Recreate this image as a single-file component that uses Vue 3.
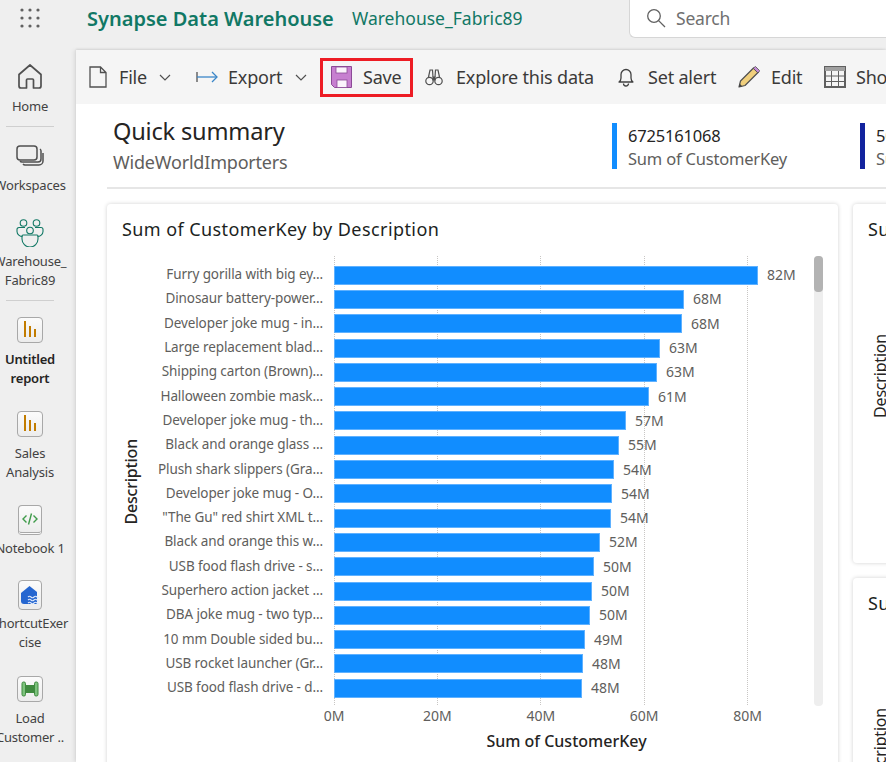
<script setup>
const rows = [
  ['Furry gorilla with big ey...', 424, '82M'],
  ['Dinosaur battery-power...', 350, '68M'],
  ['Developer joke mug - in...', 348, '68M'],
  ['Large replacement blad...', 326, '63M'],
  ['Shipping carton (Brown)...', 323, '63M'],
  ['Halloween zombie mask...', 315, '61M'],
  ['Developer joke mug - th...', 292, '57M'],
  ['Black and orange glass ...', 285, '55M'],
  ['Plush shark slippers (Gra...', 280, '54M'],
  ['Developer joke mug - O...', 278, '54M'],
  ['"The Gu" red shirt XML t...', 277, '54M'],
  ['Black and orange this w...', 266, '52M'],
  ['USB food flash drive - s...', 260, '50M'],
  ['Superhero action jacket ...', 258, '50M'],
  ['DBA joke mug - two typ...', 256, '50M'],
  ['10 mm Double sided bu...', 251, '49M'],
  ['USB rocket launcher (Gr...', 249, '48M'],
  ['USB food flash drive - d...', 248, '48M']
]
const ticks = ['0M', '20M', '40M', '60M', '80M']
</script>

<template>
  <div class="app">
    <header class="top">
      <svg class="waffle" width="20" height="20" viewBox="0 0 20 20" fill="#616161">
        <circle v-for="c in [[2,2],[10,2],[18,2],[2,10],[10,10],[18,10],[2,18],[10,18],[18,18]]" :key="c.join()" :cx="c[0]" :cy="c[1]" r="1.6" />
      </svg>
      <div class="product">Synapse Data Warehouse</div>
      <div class="item-name">Warehouse_Fabric89</div>
      <div class="search">
        <svg width="20" height="20" viewBox="0 0 20 20" fill="none" stroke="#616161" stroke-width="1.3"><circle cx="8" cy="8" r="6.3" /><path d="M12.6 12.6 19 19" /></svg>
        <span>Search</span>
      </div>
    </header>

    <div class="body">
      <nav class="nav">
        <div class="nav-item home">
          <svg width="26" height="27" viewBox="0 0 26 27" fill="none" stroke="#505050" stroke-width="1.7" stroke-linejoin="round"><path d="M2 11.5 13 2l11 9.5V23a2 2 0 0 1-2 2h-5.5v-8a1 1 0 0 0-1-1h-5a1 1 0 0 0-1 1v8H4a2 2 0 0 1-2-2z" /></svg>
          <span>Home</span>
        </div>
        <div class="rule first"></div>
        <div class="nav-item ws">
          <svg width="28" height="24" viewBox="0 0 28 24" fill="none" stroke="#505050" stroke-width="1.5"><rect x="1" y="1" width="20" height="14" rx="3" /><path d="M24 4a2.500 2.500 0 0 1 1 2v8a3 3 0 0 1-3 3H6a2.500 2.500 0 0 1-2-1" /><path d="M27 8v8a4 4 0 0 1-4 4H9a3 3 0 0 1-2-1" /></svg>
          <span>Workspaces</span>
        </div>
        <div class="nav-item wh">
          <svg width="28" height="29" viewBox="0 0 28 29" fill="none" stroke="#117865" stroke-width="1.1"><circle cx="7.500" cy="5" r="3.300" /><circle cx="20.500" cy="5" r="3.300" /><circle cx="14" cy="12.500" r="3.300" /><path d="M9 9.500H3a2 2 0 0 0-2 2v2c0 3 3 5 5.500 5M19 9.500h6a2 2 0 0 1 2 2v2c0 3-3 5-5.500 5" /><path d="M7 17h14a1 1 0 0 1 1 1v3a8 8 0 0 1-16 0v-3a1 1 0 0 1 1-1z" /></svg>
          <span>Warehouse_<br />Fabric89</span>
        </div>
        <div class="rule second"></div>
        <div class="nav-item tile-item report">
          <div class="tile"><svg width="14" height="18" viewBox="0 0 14 18" fill="#c27c00"><rect x="1" y="0" width="2" height="16" /><rect x="6" y="5" width="2" height="11" /><rect x="11" y="8" width="2" height="8" /></svg></div>
          <span><b>Untitled<br />report</b></span>
        </div>
        <div class="nav-item tile-item sales">
          <div class="tile"><svg width="14" height="18" viewBox="0 0 14 18" fill="#c27c00"><rect x="1" y="0" width="2" height="16" /><rect x="6" y="5" width="2" height="11" /><rect x="11" y="8" width="2" height="8" /></svg></div>
          <span>Sales<br />Analysis</span>
        </div>
        <div class="nav-item tile-item note">
          <div class="tile book"><svg width="16" height="12" viewBox="0 0 16 12" fill="none" stroke="#3f9b4a" stroke-width="1.400"><path d="M4.500 2.500 1 6l3.500 3.500M11.500 2.500 15 6l-3.500 3.500M9.500 0.500 6.500 11.500" /></svg></div>
          <span>Notebook 1</span>
        </div>
        <div class="nav-item tile-item shortcut">
          <div class="tile tall"><svg width="20" height="20" viewBox="0 0 20 20"><path d="M1 8 9.500 1 17 7v12H4a3 3 0 0 1-3-3z" fill="#2566d0" /><path d="M8 12q1.500-1.500 3 0t3 0 3 0 2 0M8 15q1.500-1.500 3 0t3 0 3 0 2 0M8 18q1.500-1.500 3 0t3 0 3 0 2 0" fill="none" stroke="#dfe9fa" stroke-width="1.100" /></svg></div>
          <span>ShortcutExer<br />cise</span>
        </div>
        <div class="nav-item tile-item load">
          <div class="tile"><svg width="18" height="16" viewBox="0 0 18 16"><rect x="3" y="4" width="12" height="8" fill="#3f8a3f" /><rect x="1" y="1" width="3.500" height="14" rx="1.500" fill="#7cc27c" stroke="#3f8a3f" /><rect x="13.500" y="1" width="3.500" height="14" rx="1.500" fill="#7cc27c" stroke="#3f8a3f" /></svg></div>
          <span>Load<br />Customer ..</span>
        </div>
      </nav>

      <main class="main">
        <div class="toolbar">
          <div class="tool t-file">
            <svg width="18" height="22" viewBox="0 0 18 22" fill="none" stroke="#505050" stroke-width="1.300"><path d="M1 1h10.500L17 6.500V21H1zM11.500 1v5.500H17" /></svg>
            <span>File</span>
            <svg class="chev" width="12" height="7" viewBox="0 0 12 7" fill="none" stroke="#505050" stroke-width="1.200"><path d="m1 1 5 5 5-5" /></svg>
          </div>
          <div class="tool t-export">
            <svg width="22" height="12" viewBox="0 0 22 12" fill="none" stroke-width="1.300"><path d="M1 1v10" stroke="#505050" /><path d="M1 6h20" stroke="#3a86c8" /><path d="m16 1 5 5-5 5" stroke="#3a86c8" /></svg>
            <span>Export</span>
            <svg class="chev" width="12" height="7" viewBox="0 0 12 7" fill="none" stroke="#505050" stroke-width="1.200"><path d="m1 1 5 5 5-5" /></svg>
          </div>
          <div class="tool t-save">
            <svg width="21" height="22" viewBox="0 0 21 22"><path d="M0.500 0.500h20v21H3.500l-3-3z" fill="#c77fd0" stroke="#8c4a97" /><rect x="5" y="1" width="11" height="6" fill="#fbf3fc" stroke="#8c4a97" stroke-width="0.800" /><rect x="6" y="14" width="10" height="7.500" fill="#fbf3fc" stroke="#8c4a97" stroke-width="0.800" /></svg>
            <span>Save</span>
          </div>
          <div class="tool t-explore">
            <svg width="18" height="18" viewBox="0 0 18 18" fill="none" stroke="#505050" stroke-width="1.200"><path d="M3.500 9 5 2h2.500l.500 7M14.500 9 13 2h-2.500l-.500 7" /><circle cx="4.500" cy="13" r="3.700" /><circle cx="13.500" cy="13" r="3.700" /><path d="M8 9h2v3H8z" fill="#505050" /></svg>
            <span>Explore this data</span>
          </div>
          <div class="tool t-alert">
            <svg width="16" height="19" viewBox="0 0 16 19" fill="none" stroke="#404040" stroke-width="1.300"><path d="M1 14c1.500-1 2-2.500 2-4V6.500a5 5 0 0 1 10 0V10c0 1.500.5 3 2 4z" stroke-linejoin="round" /><path d="M5.500 15.500a2.500 2.500 0 0 0 5 0" /></svg>
            <span>Set alert</span>
          </div>
          <div class="tool t-edit">
            <svg width="22" height="22" viewBox="0 0 22 22"><path d="m1 21 1.500-6L15.500 2l4.500 4.500L7 19.500z" fill="#f0cf7c" stroke="#505050" stroke-width="1.200" stroke-linejoin="round" /><path d="m16.500 1 1-.5 4 4-.5 1.500-1 1-4.500-4.500z" fill="#c48ad6" stroke="#505050" stroke-width="0.800" /><path d="m1 21 .8-3.200 2.400 2.400z" fill="#404040" /></svg>
            <span>Edit</span>
          </div>
          <div class="tool t-table">
            <svg width="22" height="22" viewBox="0 0 22 22" fill="none" stroke="#606060" stroke-width="1"><rect x="1" y="1" width="20" height="20" stroke-width="2" /><rect x="1" y="1" width="20" height="4" fill="#a0a0a0" stroke="none" /><path d="M1 10h20M1 15.500h20M7.500 5v16M14.500 5v16" /></svg>
            <span>Show tables</span>
          </div>
        </div>

        <section class="summary">
          <div class="titles">
            <div class="h1">Quick summary</div>
            <div class="h2">WideWorldImporters</div>
          </div>
          <div class="kpi blue">
            <div class="kv">6725161068</div>
            <div class="kl">Sum of CustomerKey</div>
          </div>
          <div class="kpi navy">
            <div class="kv">5034418</div>
            <div class="kl">Sum of StockItemKey</div>
          </div>
        </section>

        <section class="cards">
          <div class="card big">
            <div class="card-title">Sum of CustomerKey by Description</div>
            <div class="chart">
              <div class="yaxis"><span>Description</span></div>
              <div class="plot">
                <div class="rows">
                  <i v-for="n in [0, 1, 2, 3, 4]" :key="n" class="grid" :style="{ left: 10.5 + n * 103.4 + 'px' }"></i>
                  <div v-for="r in rows" :key="r[0]" class="row">
                    <div class="lab">{{ r[0] }}</div>
                    <div class="bar" :style="{ width: r[1] + 'px' }"></div>
                    <div class="val">{{ r[2] }}</div>
                  </div>
                </div>
                <div class="ticks">
                  <span v-for="(t, n) in ticks" :key="t" :style="{ left: n * 103.4 + 'px' }">{{ t }}</span>
                </div>
                <div class="xtitle">Sum of CustomerKey</div>
              </div>
              <div class="scroll"><div class="thumb"></div></div>
            </div>
          </div>
          <div class="side">
            <div class="card mini one">
              <div class="card-title">Sum of StockItemKey by Description</div>
              <div class="mini-y"><span>Description</span></div>
            </div>
            <div class="card mini two">
              <div class="card-title">Sum of SalesOrderKey by Description</div>
              <div class="mini-y"><span>Description</span></div>
            </div>
          </div>
        </section>
      </main>
    </div>
  </div>
</template>

<style>
html, body { margin: 0; padding: 0; overflow: hidden; }
</style>

<style scoped>
.app { width: 886px; height: 762px; overflow: hidden; background: #efefef; font-family: "Noto Sans", "Open Sans", sans-serif; color: #252423; letter-spacing: -0.2px; }
.top { height: 50px; display: flex; position: relative; align-items: flex-start; }
.waffle { margin: 8px 0 0 20px; flex: none; }
.product { margin: 5px 0 0 47px; font-size: 20px; font-weight: 600; color: #117865; white-space: nowrap; width: 265px; flex: none; line-height: 28px; letter-spacing: 0; }
.item-name { margin: 5px 0 0 0; font-size: 17.500px; letter-spacing: 0; color: #117865; white-space: nowrap; width: 277px; flex: none; line-height: 26px; }
.search { width: 300px; height: 38px; background: #fff; border: 1px solid #d6d6d6; border-top: 0; border-right: 0; border-radius: 0 0 0 6px; display: flex; align-items: center; gap: 10px; padding: 0 0 2px 16px; font-size: 17.500px; color: #707070; flex: none; box-sizing: border-box; }
.body { display: flex; height: 712px; }
.nav { width: 76px; flex: none; position: relative; box-sizing: border-box; font-size: 13px; color: #424242; }
.nav-item { width: 60px; display: flex; flex-direction: column; align-items: center; text-align: center; line-height: 19px; white-space: nowrap; }
.nav-item span { display: block; }
.home { padding-top: 13px; }
.home span { margin-top: 7px; }
.rule { width: 48px; height: 1px; background: #cfcfcf; margin-left: 6px; }
.first { margin-top: 10px; }
.ws { margin-top: 18px; }
.ws span { margin-top: 7px; }
.wh { margin-top: 23px; }
.wh span { margin-top: 5px; }
.second { margin-top: 10px; }
.tile { width: 26px; height: 26px; box-sizing: border-box; background: linear-gradient(#fbfbfb, #ececec); border: 1px solid #a8a8a8; border-radius: 4px; display: flex; align-items: center; justify-content: center; }
.tile.book { height: 30px; width: 24px; border-bottom: 3px double #a8a8a8; }
.tile.tall { height: 30px; width: 24px; }
.tile-item span { margin-top: 7px; }
.report { margin-top: 16px; }
.report b { color: #252423; font-weight: 600; }
.sales { margin-top: 23px; }
.note { margin-top: 23px; }
.note span, .shortcut span { margin-top: 4px; }
.shortcut { margin-top: 22px; }
.load { margin-top: 24px; }
.main { flex: 1; min-width: 0; background: #fff; box-shadow: -2px 0 4px rgba(0,0,0,.08), 0 -1px 2px rgba(0,0,0,.08); }
.toolbar { height: 54px; background: #f5f5f5; display: flex; align-items: center; position: relative; white-space: nowrap; font-size: 18px; color: #3b3a39; }
.tool { display: flex; align-items: center; flex: none; }
.t-file { margin-left: 13px; width: 107px; }
.t-file span { margin-left: 12px; }
.t-file .chev { margin-left: 12px; }
.t-export { width: 124px; }
.t-export span { margin-left: 10px; }
.t-export .chev { margin-left: 13px; }
.t-save { width: 93px; height: 39px; box-sizing: border-box; border: 3px solid #ed1c24; padding-left: 8px; }
.t-save span { margin-left: 11px; }
.t-explore { margin-left: 12px; width: 193px; }
.t-explore span { margin-left: 13px; }
.t-alert { width: 120px; }
.t-alert span { margin-left: 14px; }
.t-edit { width: 86px; }
.t-edit span { margin-left: 11px; }
.t-table span { margin-left: 10px; }
.summary { height: 83px; margin-left: 31px; border-bottom: 2px solid #e6e6e6; display: flex; position: relative; white-space: nowrap; }
.titles { width: 505px; flex: none; padding: 12px 0 0 6px; box-sizing: border-box; }
.h1 { font-size: 23.600px; line-height: 30px; color: #252423; }
.h2 { font-size: 18px; line-height: 26px; margin-top: 3px; color: #605e5c; }
.kpi { width: 248px; height: 46px; margin-top: 19px; box-sizing: border-box; padding: 1px 0 0 11px; flex: none; font-size: 16.500px; line-height: 23px; border-left: 5px solid #118dff; }
.kpi.navy { border-left-color: #12239e; }
.kl { color: #605e5c; }
.cards { display: flex; gap: 15px; margin: 15px 0 0 31px; align-items: flex-start; }
.card { background: #fff; border-radius: 4px; box-shadow: 0 0 4px rgba(0,0,0,.18); box-sizing: border-box; flex: none; position: relative; }
.big { width: 731px; height: 600px; }
.card-title { font-size: 18px; font-weight: 400; letter-spacing: 0.42px; line-height: 24px; padding: 13px 0 0 15px; white-space: nowrap; color: #201f1e; }
.chart { display: flex; margin-top: 15px; }
.yaxis { width: 16px; margin-left: 16px; height: 452px; display: flex; align-items: center; justify-content: center; }
.yaxis span, .mini-y span { writing-mode: vertical-rl; transform: rotate(180deg); font-size: 16px; font-weight: 500; color: #252423; white-space: nowrap; }
.mini-y span { font-weight: 400; }
.plot { width: 671px; flex: none; position: relative; }
.rows { position: relative; padding-top: 7px; height: 441px; margin-left: 0; }
.grid { position: absolute; top: 0; bottom: -1px; width: 0; border-left: 1px dotted #c8c6c4; margin-left: 184px; }
.row { height: 24.300px; display: flex; align-items: center; position: relative; }
.lab { width: 184px; margin-right: 11px; flex: none; text-align: right; font-size: 13.500px; letter-spacing: -0.1px; color: #605e5c; white-space: nowrap; padding-bottom: 2px; }
.bar { height: 19px; background: #118dff; box-shadow: inset 0 0 0 1px #5fb1ff; flex: none; }
.val { margin-left: 9px; font-size: 14px; letter-spacing: 0; color: #605e5c; padding-bottom: 1px; }
.ticks { position: relative; height: 22px; margin-left: 195px; font-size: 14px; letter-spacing: 0; color: #605e5c; }
.ticks span { position: absolute; top: 2px; transform: translateX(-50%); }
.xtitle { position: absolute; left: 195px; width: 465px; top: 474px; text-align: center; font-size: 16px; font-weight: 500; letter-spacing: 0; color: #252423; white-space: nowrap; }
.scroll { width: 9px; height: 450px; background: #eeeeee; border-radius: 4px; margin-left: 4px; flex: none; }
.thumb { height: 36px; background: #b3b3b3; border-radius: 4px; }
.side { flex: none; width: 300px; display: flex; flex-direction: column; gap: 15px; }
.mini { width: 300px; }
.one { height: 359px; }
.two { height: 300px; }
.mini-y { position: absolute; left: 16px; top: 130px; }
</style>
